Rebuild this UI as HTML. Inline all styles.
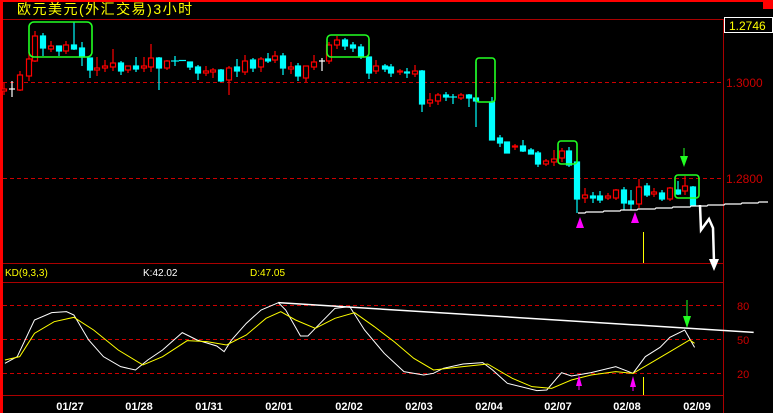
<!DOCTYPE html>
<html><head><meta charset="utf-8"><style>
html,body{margin:0;padding:0;background:#000;width:773px;height:413px;overflow:hidden}
svg{display:block}
text{font-family:"Liberation Sans","Noto Sans CJK SC",sans-serif}
</style></head><body>
<svg width="773" height="413" viewBox="0 0 773 413" xmlns="http://www.w3.org/2000/svg">
<rect width="773" height="413" fill="#000"/>
<rect x="0" y="0" width="773" height="2" fill="#f00"/>
<rect x="0" y="0" width="3" height="413" fill="#f00"/>
<rect x="763" y="0" width="10" height="9" fill="#f00"/>
<text x="17" y="14" fill="#ff0" font-size="14" letter-spacing="1.5">欧元美元(外汇交易)3小时</text>
<line x1="3" y1="19.5" x2="723" y2="19.5" stroke="#a00"/>
<line x1="723.5" y1="19" x2="723.5" y2="413" stroke="#a00"/>
<line x1="3" y1="263.5" x2="723" y2="263.5" stroke="#a00"/>
<line x1="3" y1="282.5" x2="723" y2="282.5" stroke="#a00"/>
<line x1="3" y1="395.5" x2="723" y2="395.5" stroke="#a00"/>
<g stroke="#c00" stroke-dasharray="4,3">
<line x1="3" y1="82.5" x2="723" y2="82.5"/><line x1="3" y1="178.5" x2="723" y2="178.5"/>
<line x1="3" y1="305.5" x2="723" y2="305.5"/><line x1="3" y1="339.5" x2="723" y2="339.5"/><line x1="3" y1="373.5" x2="723" y2="373.5"/>
</g>
<rect x="724.5" y="17.5" width="48" height="15" fill="#000" stroke="#fff"/>
<text x="729" y="30" fill="#ff0" font-size="12">1.2746</text>
<text x="726" y="87" fill="#c00" font-size="12">1.3000</text>
<text x="726" y="183" fill="#c00" font-size="12">1.2800</text>
<text x="737" y="310" fill="#c00" font-size="11">80</text>
<text x="737" y="344" fill="#c00" font-size="11">50</text>
<text x="737" y="378" fill="#c00" font-size="11">20</text>
<text x="5" y="276" fill="#ff0" font-size="10">KD(9,3,3)</text>
<text x="143" y="276" fill="#fff" font-size="10">K:42.02</text>
<text x="250" y="276" fill="#ff0" font-size="10">D:47.05</text>
<g fill="#fff" font-size="11" font-weight="bold" text-anchor="middle">
<text x="70" y="410">01/27</text><text x="139" y="410">01/28</text><text x="209" y="410">01/31</text><text x="279" y="410">02/01</text><text x="349" y="410">02/02</text><text x="419" y="410">02/03</text><text x="489" y="410">02/04</text><text x="558" y="410">02/07</text><text x="627" y="410">02/08</text><text x="697" y="410">02/09</text>
</g>
<g stroke="#f00" stroke-width="1.2" fill="#000">
<line x1="4" y1="83" x2="4" y2="95"/><rect x="1.5" y="89" width="5" height="2"/>
<line x1="20" y1="71" x2="20" y2="91"/><rect x="17.5" y="75" width="5" height="15"/>
<line x1="29" y1="52" x2="29" y2="81"/><rect x="26.5" y="59" width="5" height="17"/>
<line x1="35" y1="31" x2="35" y2="62"/><rect x="32.5" y="36" width="5" height="25"/>
<line x1="51" y1="41" x2="51" y2="52"/><rect x="48.5" y="46" width="5" height="3"/>
<line x1="66" y1="41" x2="66" y2="54"/><rect x="63.5" y="45" width="5" height="6"/>
<line x1="97" y1="57" x2="97" y2="76"/><rect x="94.5" y="68" width="5" height="2"/>
<line x1="105" y1="60" x2="105" y2="72"/><rect x="102.5" y="66" width="5" height="2"/>
<line x1="113" y1="49" x2="113" y2="71"/><rect x="110.5" y="63" width="5" height="4"/>
<line x1="128" y1="66" x2="128" y2="73"/><rect x="125.5" y="66" width="5" height="4"/>
<line x1="144" y1="57" x2="144" y2="72"/><rect x="141.5" y="66" width="5" height="2"/>
<line x1="151" y1="44" x2="151" y2="72"/><rect x="148.5" y="58" width="5" height="9"/>
<line x1="167" y1="60" x2="167" y2="70"/><rect x="164.5" y="61" width="5" height="7"/>
<line x1="206" y1="66" x2="206" y2="76"/><rect x="203.5" y="71" width="5" height="2"/>
<line x1="213" y1="68" x2="213" y2="78"/><rect x="210.5" y="70" width="5" height="2"/>
<line x1="229" y1="66" x2="229" y2="95"/><rect x="226.5" y="68" width="5" height="12"/>
<line x1="245" y1="55" x2="245" y2="75"/><rect x="242.5" y="61" width="5" height="11"/>
<line x1="261" y1="57" x2="261" y2="72"/><rect x="258.5" y="59" width="5" height="8"/>
<line x1="275" y1="51" x2="275" y2="63"/><rect x="272.5" y="56" width="5" height="4"/>
<line x1="291" y1="62" x2="291" y2="74"/><rect x="288.5" y="67" width="5" height="2"/>
<line x1="306" y1="66" x2="306" y2="82"/><rect x="303.5" y="66" width="5" height="12"/>
<line x1="314" y1="55" x2="314" y2="70"/><rect x="311.5" y="62" width="5" height="5"/>
<line x1="329" y1="42" x2="329" y2="64"/><rect x="326.5" y="45" width="5" height="16"/>
<line x1="337" y1="36" x2="337" y2="49"/><rect x="334.5" y="40" width="5" height="5"/>
<line x1="376" y1="60" x2="376" y2="74"/><rect x="373.5" y="66" width="5" height="5"/>
<line x1="400" y1="69" x2="400" y2="75"/><rect x="397.5" y="71" width="5" height="1"/>
<line x1="415" y1="65" x2="415" y2="77"/><rect x="412.5" y="71" width="5" height="3"/>
<line x1="430" y1="93" x2="430" y2="107"/><rect x="427.5" y="100" width="5" height="3"/>
<line x1="438" y1="93" x2="438" y2="105"/><rect x="435.5" y="95" width="5" height="6"/>
<line x1="461" y1="93" x2="461" y2="100"/><rect x="458.5" y="95" width="5" height="3"/>
<line x1="515" y1="144" x2="515" y2="150"/><rect x="512.5" y="146" width="5" height="1"/>
<line x1="546" y1="159" x2="546" y2="166"/><rect x="543.5" y="161" width="5" height="3"/>
<line x1="554" y1="150" x2="554" y2="166"/><rect x="551.5" y="159" width="5" height="3"/>
<line x1="562" y1="148" x2="562" y2="162"/><rect x="559.5" y="151" width="5" height="7"/>
<line x1="585" y1="188" x2="585" y2="203"/><rect x="582.5" y="195" width="5" height="3"/>
<line x1="608" y1="193" x2="608" y2="200"/><rect x="605.5" y="196" width="5" height="2"/>
<line x1="616" y1="189" x2="616" y2="200"/><rect x="613.5" y="190" width="5" height="8"/>
<line x1="639" y1="179" x2="639" y2="208"/><rect x="636.5" y="187" width="5" height="17"/>
<line x1="654" y1="188" x2="654" y2="197"/><rect x="651.5" y="192" width="5" height="2"/>
<line x1="670" y1="187" x2="670" y2="201"/><rect x="667.5" y="188" width="5" height="11"/>
<line x1="685" y1="176" x2="685" y2="195"/><rect x="682.5" y="186" width="5" height="5"/>
</g>
<g stroke="#0ff" stroke-width="1.2" fill="#0ff">
<line x1="43" y1="33" x2="43" y2="56"/><rect x="40.5" y="36" width="5" height="12"/>
<line x1="59" y1="46" x2="59" y2="56"/><rect x="56.5" y="46" width="5" height="5"/>
<line x1="74" y1="22" x2="74" y2="50"/><rect x="71.5" y="45" width="5" height="4"/>
<line x1="82" y1="42" x2="82" y2="66"/><rect x="79.5" y="48" width="5" height="9"/>
<line x1="90" y1="58" x2="90" y2="78"/><rect x="87.5" y="58" width="5" height="12"/>
<line x1="121" y1="61" x2="121" y2="75"/><rect x="118.5" y="63" width="5" height="8"/>
<line x1="136" y1="57" x2="136" y2="72"/><rect x="133.5" y="66" width="5" height="3"/>
<line x1="159" y1="57" x2="159" y2="90"/><rect x="156.5" y="58" width="5" height="10"/>
<line x1="175" y1="56" x2="175" y2="66"/><line x1="171" y1="61" x2="179" y2="61"/>
<line x1="179" y1="60.5" x2="186" y2="60.5"/>
<line x1="190" y1="62" x2="190" y2="70"/><rect x="187.5" y="62" width="5" height="5"/>
<line x1="198" y1="65" x2="198" y2="80"/><rect x="195.5" y="67" width="5" height="6"/>
<line x1="221" y1="69" x2="221" y2="82"/><rect x="218.5" y="70" width="5" height="11"/>
<line x1="237" y1="59" x2="237" y2="77"/><rect x="234.5" y="67" width="5" height="4"/>
<line x1="253" y1="58" x2="253" y2="72"/><rect x="250.5" y="60" width="5" height="8"/>
<line x1="268" y1="53" x2="268" y2="63"/><rect x="265.5" y="59" width="5" height="2"/>
<line x1="283" y1="53" x2="283" y2="75"/><rect x="280.5" y="56" width="5" height="12"/>
<line x1="298" y1="63" x2="298" y2="81"/><rect x="295.5" y="66" width="5" height="10"/>
<line x1="345" y1="38" x2="345" y2="50"/><rect x="342.5" y="40" width="5" height="6"/>
<line x1="353" y1="42" x2="353" y2="52"/><rect x="350.5" y="45" width="5" height="3"/>
<line x1="361" y1="44" x2="361" y2="59"/><rect x="358.5" y="47" width="5" height="10"/>
<line x1="369" y1="57" x2="369" y2="79"/><rect x="366.5" y="57" width="5" height="16"/>
<line x1="385" y1="64" x2="385" y2="72"/><rect x="382.5" y="66" width="5" height="3"/>
<line x1="391" y1="64" x2="391" y2="77"/><rect x="388.5" y="67" width="5" height="6"/>
<line x1="407" y1="68" x2="407" y2="78"/><rect x="404.5" y="72" width="5" height="1"/>
<line x1="422" y1="70" x2="422" y2="112"/><rect x="419.5" y="71" width="5" height="33"/>
<line x1="446" y1="92" x2="446" y2="101"/><rect x="443.5" y="95" width="5" height="2"/>
<line x1="453" y1="94" x2="453" y2="104"/><line x1="449" y1="97" x2="457" y2="97"/>
<line x1="469" y1="94" x2="469" y2="107"/><rect x="466.5" y="95" width="5" height="3"/>
<line x1="476" y1="62" x2="476" y2="127"/><rect x="473.5" y="98" width="5" height="3"/>
<line x1="492" y1="97" x2="492" y2="140"/><rect x="489.5" y="102" width="5" height="38"/>
<line x1="500" y1="135" x2="500" y2="147"/><rect x="497.5" y="138" width="5" height="5"/>
<rect x="504.5" y="142" width="5" height="11"/>
<line x1="523" y1="140" x2="523" y2="152"/><rect x="520.5" y="146" width="5" height="5"/>
<line x1="531" y1="148" x2="531" y2="154"/><rect x="528.5" y="150" width="5" height="4"/>
<line x1="538" y1="151" x2="538" y2="167"/><rect x="535.5" y="153" width="5" height="11"/>
<line x1="569" y1="147" x2="569" y2="167"/><rect x="566.5" y="151" width="5" height="14"/>
<line x1="577" y1="162" x2="577" y2="213"/><rect x="574.5" y="162" width="5" height="37"/>
<line x1="593" y1="192" x2="593" y2="203"/><rect x="590.5" y="196" width="5" height="2"/>
<line x1="600" y1="191" x2="600" y2="203"/><rect x="597.5" y="196" width="5" height="4"/>
<line x1="624" y1="187" x2="624" y2="210"/><rect x="621.5" y="190" width="5" height="13"/>
<line x1="631" y1="190" x2="631" y2="210"/><rect x="628.5" y="201" width="5" height="3"/>
<line x1="647" y1="183" x2="647" y2="197"/><rect x="644.5" y="186" width="5" height="9"/>
<line x1="662" y1="190" x2="662" y2="201"/><rect x="659.5" y="193" width="5" height="6"/>
<line x1="678" y1="181" x2="678" y2="195"/><rect x="675.5" y="190" width="5" height="4"/>
<line x1="693" y1="186" x2="693" y2="206"/><rect x="690.5" y="187" width="5" height="18"/>
</g>
<g stroke="#fff" stroke-width="1.2">
<line x1="12" y1="81" x2="12" y2="97"/><line x1="9" y1="89" x2="15" y2="89"/>
<line x1="322" y1="58" x2="322" y2="71"/><line x1="319" y1="61" x2="325" y2="61"/>
</g>
<g fill="none" stroke="#2f2" stroke-width="1.6">
<rect x="29" y="22" width="63" height="35" rx="5"/>
<rect x="327" y="35" width="42" height="22" rx="4"/>
<rect x="476" y="58" width="19" height="44" rx="3"/>
<rect x="558" y="141" width="19" height="23" rx="3"/>
<rect x="675" y="175" width="24" height="23" rx="3"/>
</g>
<polygon points="680,156 688,156 684,167" fill="#2f2"/><line x1="684" y1="148" x2="684" y2="158" stroke="#2f2"/>
<polyline points="578,213 585,213 586,212 603,212 604,211 620,211 621,210 637,210 638,209 655,209 656,208 672,208 673,207 690,207 691,206 707,206 708,205 724,205 725,204 741,204 742,203 758,203 759,202 768,202" fill="none" stroke="#fff" stroke-width="1.2"/>
<polygon points="580,217 576,228 584,228" fill="#f0f"/>
<polygon points="635,212 631,223 639,223" fill="#f0f"/>
<line x1="643.5" y1="232" x2="643.5" y2="263" stroke="#ff0"/>
<polyline points="700,205 701,230 709,219 713,228 714,262" fill="none" stroke="#fff" stroke-width="2.5"/>
<polygon points="709,259 719,259 714,271" fill="#fff"/>
<g transform="translate(0,260) scale(0.4926,0.3333)" fill="none">
<polyline vector-effect="non-scaling-stroke" stroke="#fff" stroke-width="1" points="10,310 35,290 70,180 105,158 135,155 150,165 180,240 210,290 245,320 275,330 300,300 330,270 370,218 400,240 440,258 455,275 470,240 500,190 530,150 565,128 580,150 610,228 625,228 650,190 680,145 710,140 740,210 780,280 820,335 860,345 880,340 900,325 940,312 980,308 1000,330 1030,370 1090,392 1110,390 1140,338 1160,348 1200,338 1250,320 1285,340 1310,290 1340,262 1360,232 1390,210 1410,262"/>
<polyline vector-effect="non-scaling-stroke" stroke="#ff0" stroke-width="1" points="10,300 40,290 70,220 110,185 150,172 190,210 240,270 290,315 330,290 380,242 420,245 460,255 500,225 540,175 570,155 600,180 640,205 680,175 720,158 760,200 800,245 840,295 880,330 940,320 990,312 1040,355 1080,380 1120,385 1160,360 1200,345 1250,335 1285,340 1320,310 1360,275 1400,240 1410,250"/>
<line vector-effect="non-scaling-stroke" x1="565" y1="128" x2="1530" y2="217" stroke="#fff" stroke-width="1.5"/>
</g>
<line x1="687" y1="300" x2="687" y2="318" stroke="#2f2"/>
<polygon points="683,316 691,316 687,328" fill="#2f2"/>
<polygon points="579,375 576,386 582,386" fill="#f0f"/><line x1="579" y1="385" x2="579" y2="390" stroke="#f0f"/>
<polygon points="633,376 630,387 636,387" fill="#f0f"/><line x1="633" y1="386" x2="633" y2="391" stroke="#f0f"/>
<line x1="643.5" y1="377" x2="643.5" y2="395" stroke="#ff0"/>
</svg>
</body></html>
